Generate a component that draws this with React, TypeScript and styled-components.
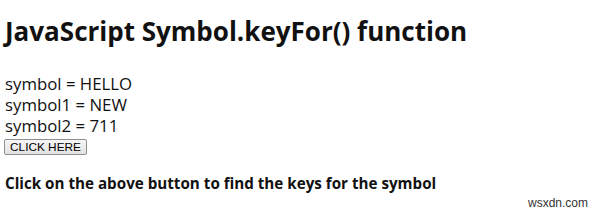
import React from "react";
import styled, { createGlobalStyle } from "styled-components";

const Global = createGlobalStyle`
  html, body { margin: 0; padding: 0; background: #fff; }
  body { font-family: "Open Sans", "Noto Sans", sans-serif; color: #000; }
`;

const Page = styled.div`
  position: relative;
  height: 213px;
  box-sizing: border-box;
  padding: 15px 5px 0 5px;
  display: flex;
  flex-direction: column;
  align-items: flex-start;
`;

const Title = styled.h2`
  margin: 0 0 26px 0;
  font-size: 26px;
  line-height: 32px;
  font-weight: 700;
  color: #111;
`;

const Line = styled.div`
  font-size: 16.8px;
  line-height: 21px;
  color: #111;
`;

const Button = styled.button`
  font-family: "Liberation Sans", Arial, sans-serif;
  font-size: 11.8px;
  padding: 0;
  margin: 3px 0 0 -1px;
  border: 1px solid #8f8f8f;
  border-radius: 2px;
  background: linear-gradient(#f6f6f6, #e3e3e3);
  color: #000;
  height: 16px;
  width: 83px;
  line-height: 13px;
  white-space: nowrap;
  text-align: center;
`;

const Note = styled.h4`
  margin: 18px 0 0 0;
  font-size: 15.2px;
  line-height: 20px;
  font-weight: 700;
  color: #111;
`;

const Watermark = styled.span`
  position: absolute;
  right: 12px;
  bottom: 3px;
  font-family: "Liberation Sans", Arial, sans-serif;
  font-size: 12px;
  line-height: 14px;
  color: #333;
`;

export default function App() {
  return (
    <>
      <Global />
      <Page>
        <Title>JavaScript Symbol.keyFor() function</Title>
        <Line>symbol = HELLO</Line>
        <Line>symbol1 = NEW</Line>
        <Line>symbol2 = 711</Line>
        <Button>CLICK HERE</Button>
        <Note>Click on the above button to find the keys for the symbol</Note>
        <Watermark>wsxdn.com</Watermark>
      </Page>
    </>
  );
}
